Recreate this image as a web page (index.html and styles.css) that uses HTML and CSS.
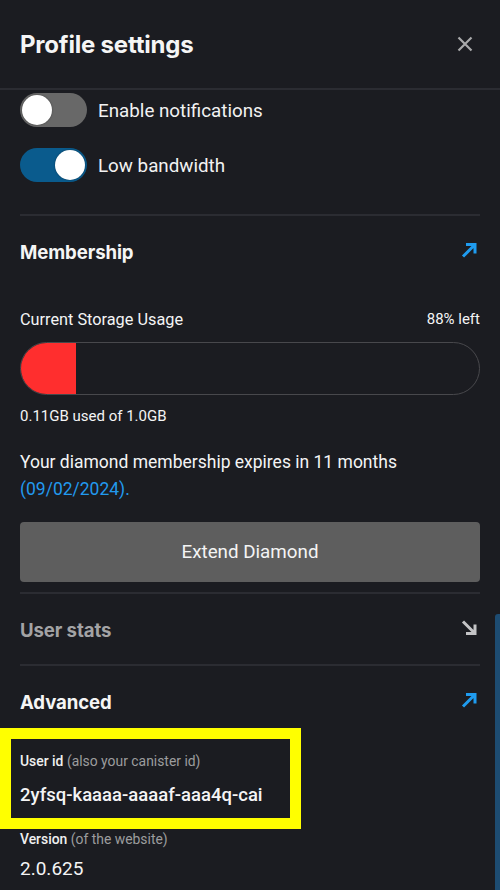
FILE: index.html
```html
<!DOCTYPE html>
<html>
<head>
<meta charset="utf-8">
<link rel="stylesheet" href="styles.css">
</head>
<body>
<div class="panel">
  <header class="header">
    <h1 class="title">Profile settings</h1>
    <svg class="close" width="16" height="16" viewBox="0 0 16 16"><path d="M1.5 1.5 L14.5 14.5 M14.5 1.5 L1.5 14.5" stroke="#a9a9ab" stroke-width="2.2" fill="none"/></svg>
  </header>
  <div class="content">
    <div class="toggles">
      <div class="toggle-row">
        <span class="switch off"><span class="knob"></span></span>
        <span class="toggle-label">Enable notifications</span>
      </div>
      <div class="toggle-row">
        <span class="switch on"><span class="knob"></span></span>
        <span class="toggle-label">Low bandwidth</span>
      </div>
    </div>

    <section class="section">
      <div class="section-head">
        <h2 class="section-title">Membership</h2>
        <svg class="arrow" width="16" height="16" viewBox="0 0 16 16"><path d="M2 14.5 L13.5 3 M5 2.5 H14 V11.5" stroke="#1f9bef" stroke-width="3" fill="none"/></svg>
      </div>
      <div class="usage-head">
        <span class="usage-label">Current Storage Usage</span>
        <span class="usage-left">88% left</span>
      </div>
      <div class="bar"><div class="bar-fill" style="width:12%"></div></div>
      <div class="usage-sub">0.11GB used of 1.0GB</div>
      <p class="expiry">Your diamond membership expires in 11 months <span class="date">(09/02/2024).</span></p>
      <button class="extend">Extend Diamond</button>
    </section>

    <section class="section">
      <div class="section-head">
        <h2 class="section-title muted">User stats</h2>
        <svg class="arrow" width="16" height="16" viewBox="0 0 16 16"><path d="M2 1.5 L13.5 13 M14 4.5 V13.5 H5" stroke="#c4c4c6" stroke-width="3" fill="none"/></svg>
      </div>
    </section>

    <section class="section last">
      <div class="section-head">
        <h2 class="section-title">Advanced</h2>
        <svg class="arrow" width="16" height="16" viewBox="0 0 16 16"><path d="M2 14.5 L13.5 3 M5 2.5 H14 V11.5" stroke="#1f9bef" stroke-width="3" fill="none"/></svg>
      </div>
      <div class="field highlighted">
        <div class="field-label"><b>User id</b> <span class="hint">(also your canister id)</span></div>
        <div class="field-value">2yfsq-kaaaa-aaaaf-aaa4q-cai</div>
        <div class="highlight"></div>
      </div>
      <div class="field version">
        <div class="field-label"><b>Version</b> <span class="hint">(of the website)</span></div>
        <div class="field-value">2.0.625</div>
      </div>
    </section>
  </div>
  <div class="scrollbar"></div>
</div>
</body>
</html>
```

FILE: styles.css
```css
* { box-sizing: border-box; }
html, body {
  margin: 0;
  padding: 0;
  background: #1b1c21;
  color: #f4f4f5;
  font-family: Roboto, "Liberation Sans", sans-serif;
  overflow: hidden;
}
.panel {
  position: relative;
  width: 500px;
  height: 890px;
  overflow: hidden;
}
.header {
  height: 90px;
  padding: 0 27px 0 20px;
  display: flex;
  align-items: center;
  justify-content: space-between;
  border-bottom: 2px solid #2b2c32;
}
.title {
  margin: 0;
  font-family: Inter, "Open Sans", sans-serif;
  font-weight: 700;
  font-size: 24px;
  letter-spacing: -0.2px;
  color: #f5f5f5;
}
.close { display: block; }
.content { padding: 0 20px; }

.toggles {
  display: flex;
  flex-direction: column;
  gap: 21px;
  padding-top: 3px;
  padding-bottom: 32px;
}
.toggle-row {
  display: flex;
  align-items: center;
  gap: 11px;
}
.switch {
  position: relative;
  display: block;
  width: 67px;
  height: 34px;
  border-radius: 17px;
}
.switch.off { background: #686868; }
.switch.on { background: #0a5b8d; }
.knob {
  position: absolute;
  top: 2px;
  width: 30px;
  height: 30px;
  border-radius: 50%;
  background: #fff;
  box-shadow: 0 0 2px rgba(0,0,0,0.4);
}
.switch.off .knob { left: 2px; }
.switch.on .knob { right: 2px; }
.toggle-label {
  font-size: 18.8px;
  line-height: 24px;
  padding-top: 2px;
  color: #f2f2f2;
}

.section {
  border-top: 2px solid #2b2c32;
}
.section-head {
  height: 70px;
  padding-top: 1px;
  display: flex;
  align-items: center;
  justify-content: space-between;
  padding-right: 3px;
}
.section-title {
  margin: 0;
  font-family: Inter, "Open Sans", sans-serif;
  font-weight: 700;
  font-size: 18.6px;
  letter-spacing: -0.1px;
  color: #f5f5f5;
}
.section-title.muted { color: #a3a3a5; }
.arrow { display: block; margin-top: -4px; }

.usage-head {
  margin-top: 23px;
  display: flex;
  justify-content: space-between;
  align-items: center;
  height: 20px;
}
.usage-label { font-size: 16.3px; }
.usage-left { font-size: 15px; }
.bar {
  margin-top: 13px;
  height: 53px;
  border: 1.5px solid #48484c;
  border-radius: 27px;
  overflow: hidden;
}
.bar-fill {
  height: 100%;
  background: #ff2e2e;
}
.usage-sub {
  margin-top: 11px;
  font-size: 15px;
  line-height: 20px;
}
.expiry {
  margin: 23px 0 0;
  font-size: 17.5px;
  line-height: 27px;
  padding-right: 60px;
}
.date { color: #2299ee; }
.extend {
  display: block;
  width: 100%;
  height: 60px;
  margin: 19px 0 10px;
  border: none;
  border-radius: 4px;
  background: #5e5e5e;
  color: #f4f4f4;
  font-family: Roboto, "Liberation Sans", sans-serif;
  font-size: 18.8px;
}

.field { position: relative; }
.highlighted { margin-top: 16px; }
.field-label {
  font-size: 13.9px;
  line-height: 18px;
}
.field-label b { font-weight: 500; color: #f0f0f0; }
.hint { color: #9c9c9e; }
.field-value {
  margin-top: 13px;
  font-size: 18.5px;
  line-height: 24px;
  font-weight: 500;
}
.version { margin-top: 23px; }
.version .field-value { margin-top: 9px; font-weight: 400; font-size: 19px; }
.highlight {
  position: absolute;
  left: -20px;
  top: -24px;
  width: 301px;
  height: 101px;
  border: 11px solid #ffff00;
  pointer-events: none;
}
.scrollbar {
  position: absolute;
  right: 0;
  top: 614px;
  width: 5px;
  height: 290px;
  background: #1d4c72;
  border-radius: 3px 0 0 0;
}
```
